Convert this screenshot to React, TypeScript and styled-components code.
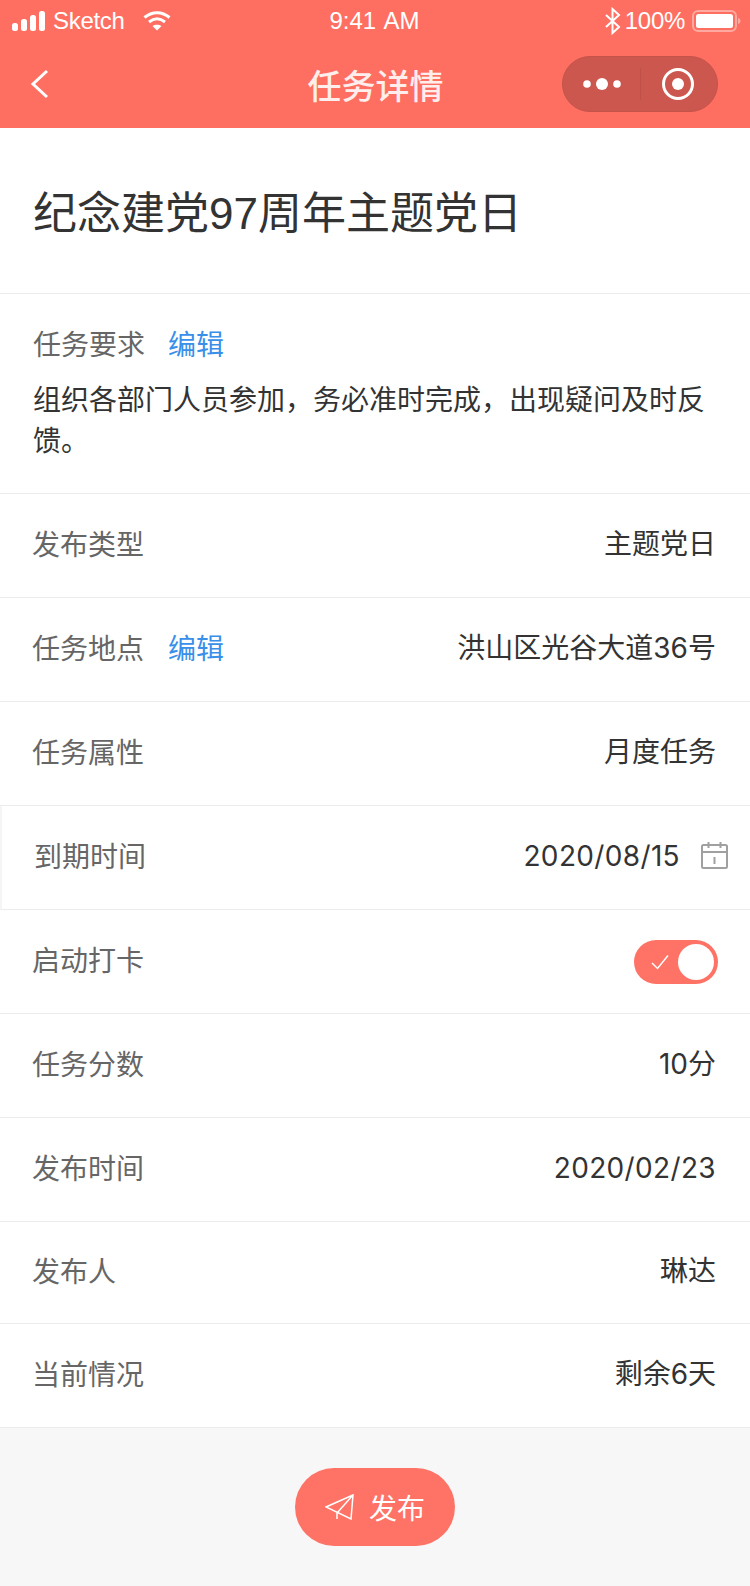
import React from "react";
import styled, { createGlobalStyle } from "styled-components";

const Global = createGlobalStyle`
  html, body { margin: 0; padding: 0; background: #f7f7f7; }
  * { box-sizing: border-box; }
  body { font-family: "Liberation Sans", "Noto Sans CJK SC", sans-serif; }
`;
const Page = styled.div`
  width: 750px; height: 1586px; display: flex; flex-direction: column; background: #f7f7f7; overflow: hidden;
`;
const Header = styled.header`
  height: 128px; background: #ff6f61; color: #fff; display: flex; flex-direction: column; flex: none;
`;
const StatusBar = styled.div`
  height: 40px; display: grid; grid-template-columns: 1fr auto 1fr; align-items: center; padding: 1px 9px 0 12px; font-size: 24px; line-height: 40px;
`;
const StatusLeft = styled.div`display: flex; align-items: center; gap: 7px;`;
const StatusRight = styled.div`display: flex; align-items: center; justify-content: flex-end; gap: 4px;`;
const Carrier = styled.span`margin-right: 11px; letter-spacing: -0.3px;`;
const Clock = styled.span`word-spacing: 2px; padding-right: 4px;`;
const Percent = styled.span`letter-spacing: -0.3px; margin-right: 3px;`;
const NavBar = styled.div`
  flex: 1; display: flex; align-items: center; justify-content: space-between; padding: 0 32px 0 30px; position: relative;
`;
const NavTitle = styled.div`
  position: absolute; left: 0; right: 0; top: 0; bottom: 0; display: flex; align-items: center; justify-content: center;
  font-size: 34px; font-weight: 500; font-family: "Noto Sans CJK SC", sans-serif; color: #ffeeec; padding-left: 1px;
`;
const Capsule = styled.div`
  width: 156px; height: 56px; border-radius: 28px; background: #cc574e; border: 1px solid #c4534a; display: flex; align-items: center; position: relative; z-index: 1;
`;
const CapsulePart = styled.div`flex: 1; height: 100%; display: flex; align-items: center; justify-content: center;`;
const DotsPart = styled(CapsulePart)`padding-left: 2px;`;
const RingPart = styled(CapsulePart)`padding-right: 2px;`;
const CapsuleDivider = styled.div`width: 1px; height: 32px; background: #bf5148;`;
const Main = styled.main`background: #fff; flex: none;`;
const TitleSection = styled.section`
  height: 166px; border-bottom: 1px solid #ececec; padding: 56px 33px 0; font-size: 44px; line-height: 60px; color: #333;
`;
const Requirement = styled.section`
  height: 200px; border-bottom: 1px solid #ececec; padding: 30px 33px 0;
`;
const Label = styled.span`
  color: #666; font-size: 28px; line-height: 40px;
`;
const Edit = styled.span<{ $gap?: number }>`color: #3a8fe8; font-size: 28px; margin-left: ${p => p.$gap ?? 24}px; line-height: 40px;`;
const LabelLine = styled.div`display: flex; height: 44px; align-items: center;`;
const Body = styled.p`margin: 12px 0 0; font-size: 28px; line-height: 41px; color: #333; width: 684px;`;
const Row = styled.div<{ $h?: number; $edge?: boolean }>`
  height: ${p => p.$h ?? 104}px; border-bottom: 1px solid #ececec; display: flex; align-items: center; justify-content: space-between; padding: 0 34px 0 32px;
  ${p => p.$edge ? "border-left: 2px solid #f5f5f5; padding-right: 22px;" : ""}
`;
const LabelGroup = styled.div`display: flex; align-items: center;`;
const Value = styled.span<{ $date?: boolean }>`
  font-size: 28px; line-height: 40px; color: #333; font-family: Inter, "Noto Sans CJK SC", sans-serif; padding-bottom: 3px;
  letter-spacing: ${p => (p.$date ? "0.35px" : "0")};
`;
const DateGroup = styled.div`display: flex; align-items: center; gap: 21px;`;
const CalendarIcon = styled.svg`margin-top: -4px;`;
const Switch = styled.div`
  width: 84px; height: 44px; border-radius: 22px; background: #ff7366; display: flex; align-items: center; justify-content: space-between; padding: 0 4px 0 17px; margin-right: -2px;
`;
const Knob = styled.div`width: 36px; height: 36px; border-radius: 50%; background: #fff;`;
const Footer = styled.footer`flex: 1; display: flex; justify-content: center; padding-top: 40px;`;
const Publish = styled.button`
  width: 160px; height: 78px; border: 0; border-radius: 39px; background: #ff7366; color: #fff; display: flex; align-items: center; justify-content: center; gap: 14px;
  font-family: "Noto Sans CJK SC", sans-serif; font-size: 28px; padding: 0;
`;

export default function App() {
  return (
    <Page>
      <Global />
      <Header>
        <StatusBar>
          <StatusLeft>
            <svg width="34" height="20" viewBox="0 0 34 20" fill="#fff">
              <rect x="0" y="12" width="6" height="8" rx="2.500" />
              <rect x="9" y="8" width="6" height="12" rx="2.500" />
              <rect x="18" y="4" width="6" height="16" rx="2.500" />
              <rect x="27" y="0" width="6" height="20" rx="2.500" />
            </svg>
            <Carrier>Sketch</Carrier>
            <svg width="28" height="20" viewBox="0 0 28 20" fill="none" stroke="#fff" strokeWidth="3">
              <path d="M1.500 6.500C9 0 19 0 26.500 6.500" />
              <path d="M6 11c5-4 11-4 16 0" />
              <path d="M14 19.500l-4.500-4.500c2.500-1.800 6.500-1.800 9 0z" fill="#fff" stroke="none" />
            </svg>
          </StatusLeft>
          <Clock>9:41 AM</Clock>
          <StatusRight>
            <svg width="16" height="28" viewBox="0 0 16 28" fill="none" stroke="#fff" strokeWidth="2">
              <path d="M1 8l13 12-6.500 6V2L14 8 1 20" />
            </svg>
            <Percent>100%</Percent>
            <svg width="49" height="22" viewBox="0 0 49 22" fill="none">
              <rect x="1" y="1" width="43" height="20" rx="5" stroke="#ffa9a1" strokeWidth="2" />
              <rect x="4" y="4" width="37" height="14" rx="2.500" fill="#fff" />
              <path d="M46 8c1.800.5 2.500 2 2.500 3s-.7 2.500-2.500 3z" fill="#ffa9a1" />
            </svg>
          </StatusRight>
        </StatusBar>
        <NavBar>
          <svg width="20" height="30" viewBox="0 0 20 30" fill="none" stroke="#fff" strokeWidth="3">
            <path d="M17 2L3 15l14 13" />
          </svg>
          <NavTitle>任务详情</NavTitle>
          <Capsule>
            <DotsPart>
              <svg width="38" height="14" viewBox="0 0 38 14" fill="#fff">
                <circle cx="4" cy="7" r="3.800" /><circle cx="19" cy="7" r="6" /><circle cx="34" cy="7" r="3.800" />
              </svg>
            </DotsPart>
            <CapsuleDivider />
            <RingPart>
              <svg width="34" height="34" viewBox="0 0 34 34">
                <circle cx="17" cy="17" r="14.500" fill="none" stroke="#fff" strokeWidth="3" />
                <circle cx="17" cy="17" r="6" fill="#fff" />
              </svg>
            </RingPart>
          </Capsule>
        </NavBar>
      </Header>
      <Main>
        <TitleSection>纪念建党97周年主题党日</TitleSection>
        <Requirement>
          <LabelLine><Label>任务要求</Label><Edit $gap={23}>编辑</Edit></LabelLine>
          <Body>组织各部门人员参加，务必准时完成，出现疑问及时反馈。</Body>
        </Requirement>
        <Row><Label>发布类型</Label><Value>主题党日</Value></Row>
        <Row><LabelGroup><Label>任务地点</Label><Edit>编辑</Edit></LabelGroup><Value>洪山区光谷大道36号</Value></Row>
        <Row><Label>任务属性</Label><Value>月度任务</Value></Row>
        <Row $edge>
          <Label>到期时间</Label>
          <DateGroup>
            <Value $date>2020/08/15</Value>
            <CalendarIcon width="27" height="27" viewBox="0 0 27 27" fill="none" stroke="#a0a0a0" strokeWidth="2">
              <rect x="1" y="3" width="25" height="23" rx="1.500" />
              <path d="M1 10h25M7.500 0v6M19.500 0v6M13.500 15v7" />
            </CalendarIcon>
          </DateGroup>
        </Row>
        <Row>
          <Label>启动打卡</Label>
          <Switch>
            <svg width="18" height="16" viewBox="0 0 18 16" fill="none" stroke="#fff" strokeWidth="1.500">
              <path d="M1 9l5.500 5.500L17 1.500" />
            </svg>
            <Knob />
          </Switch>
        </Row>
        <Row><Label>任务分数</Label><Value>10分</Value></Row>
        <Row><Label>发布时间</Label><Value $date>2020/02/23</Value></Row>
        <Row $h={102}><Label>发布人</Label><Value>琳达</Value></Row>
        <Row><Label>当前情况</Label><Value>剩余6天</Value></Row>
      </Main>
      <Footer>
        <Publish>
          <svg width="30" height="26" viewBox="0 0 30 26" fill="none" stroke="#fff" strokeWidth="1.500">
            <path d="M28 1L1 13l25 12zM28 1L12 19v6" />
          </svg>
          发布
        </Publish>
      </Footer>
    </Page>
  );
}
